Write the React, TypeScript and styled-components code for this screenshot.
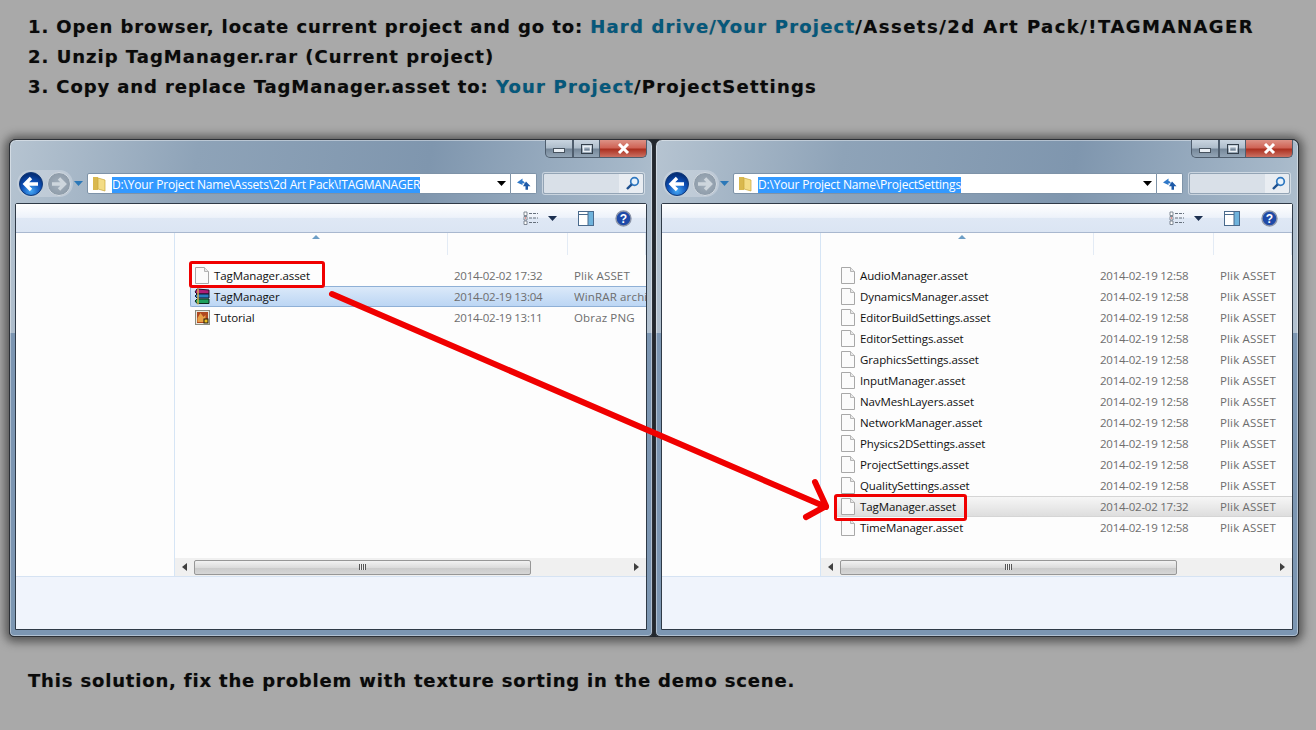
import React from 'react';
import styled, { createGlobalStyle } from 'styled-components';

const GlobalStyle = createGlobalStyle`
  html, body {
    margin: 0;
    padding: 0;
    background: #a9a9a9;
  }
`;

const Page = styled.div`
  position: relative;
  width: 1316px;
  height: 730px;
  overflow: hidden;
  background: #a9a9a9;
`;

const Instructions = styled.ol`
  list-style: none;
  margin: 0;
  padding: 12px 0 0 28px;
`;

const Line = styled.li<{ $ls: number }>`
  height: 30px;
  font: bold 18px/30px 'DejaVu Sans', Verdana, sans-serif;
  letter-spacing: ${(p) => p.$ls}px;
  color: #0a0a0a;
  white-space: nowrap;
  text-shadow: 0 0 1px rgba(0, 0, 0, 0.35);
`;

const Accent = styled.span`
  color: #05587c;
  letter-spacing: 1.2px;
`;

const Tail = styled.span<{ $ls: number }>`
  letter-spacing: ${(p) => p.$ls}px;
`;

const Windows = styled.div`
  display: flex;
  gap: 2px;
  width: 1290px;
  margin: 37px 0 0 9px;
  background: #22272d;
  border-radius: 7px 7px 5px 5px;
  box-shadow: 0 1px 10px 4px rgba(30, 30, 30, 0.6);
`;

const Win = styled.div`
  width: 644px;
  height: 498px;
  box-sizing: border-box;
  padding: 0 5px 6px 5px;
  display: flex;
  flex-direction: column;
  border: 1px solid #2c3036;
  border-radius: 7px 7px 5px 5px;
  background:
    linear-gradient(to bottom, transparent 193px, #7c96b2 193px),
    linear-gradient(100deg, #b6c4d1 0%, #8ea3b8 26%, #7f96ae 58%, #a6b8c9 86%, #c3ced9 100%);
  box-shadow: inset 0 0 0 1px rgba(255, 255, 255, 0.4);
`;

const TitleBar = styled.div`
  height: 18px;
  display: flex;
  justify-content: flex-end;
  flex: none;
`;

const Caption = styled.div<{ $close?: boolean; $w: number }>`
  width: ${(p) => p.$w}px;
  height: 18px;
  box-sizing: border-box;
  display: flex;
  align-items: center;
  justify-content: center;
  border: 1px solid #4f5e6e;
  border-top: none;
  border-left-width: ${(p) => (p.$close ? 0 : 1)}px;
  border-radius: ${(p) => (p.$close ? '0 0 5px 0' : '0')};
  background: ${(p) =>
    p.$close
      ? 'linear-gradient(#dd9286 0%, #cf6355 46%, #ab3020 54%, #cb7062 100%)'
      : 'linear-gradient(#c9d5e0 0%, #aebdcb 46%, #76889a 54%, #93a5b6 100%)'};
  &:first-child {
    border-radius: 0 0 0 5px;
  }
`;

const NavRow = styled.div`
  height: 27px;
  margin-top: 12px;
  display: flex;
  align-items: center;
  flex: none;
`;

const NavButtons = styled.div`
  width: 72px;
  flex: none;
  display: flex;
  align-items: center;
`;

const NavPill = styled.div`
  display: flex;
  align-items: center;
  gap: 2px;
  padding: 0 1px;
  margin-left: 2px;
  height: 27px;
  border-radius: 14px;
  background: rgba(214, 222, 230, 0.45);
`;

const DropArrow = styled.div`
  margin-left: 1px;
  display: flex;
`;

const AddressBar = styled.div`
  width: 424px;
  height: 21px;
  box-sizing: border-box;
  flex: none;
  display: flex;
  align-items: center;
  background: #fff;
  border: 1px solid #7e93a8;
  border-radius: 2px 0 0 2px;
  padding: 0 4px 0 4px;
`;

const Path = styled.div`
  flex: 1;
  margin-left: 6px;
  min-width: 0;
`;

const Selected = styled.span`
  display: inline-block;
  background: #3399ff;
  color: #fff;
  font: 12px/16px 'Open Sans', 'Noto Sans', sans-serif;
  letter-spacing: -0.18px;
  white-space: nowrap;
`;

const Refresh = styled.div`
  width: 26px;
  height: 21px;
  box-sizing: border-box;
  flex: none;
  display: flex;
  align-items: center;
  justify-content: center;
  background: #fff;
  border: 1px solid #7e93a8;
  border-left: none;
  border-radius: 0 2px 2px 0;
`;

const Search = styled.div`
  width: 101px;
  height: 21px;
  box-sizing: border-box;
  flex: none;
  margin-left: 6px;
  display: flex;
  align-items: center;
  justify-content: flex-end;
  padding-right: 3px;
  border: 1px solid #93a4b5;
  border-radius: 2px;
  box-shadow: 0 0 0 1px rgba(235, 240, 245, 0.6);
  background: linear-gradient(90deg, #d9e0e8 0%, #d9e0e8 76%, #e9edf2 76%, #e9edf2 100%);
`;

const Content = styled.div`
  margin-top: 6px;
  flex: 1;
  min-height: 0;
  display: flex;
  flex-direction: column;
  border: 1px solid #2f3a47;
  border-radius: 2px 2px 0 0;
  background: #fff;
`;

const Toolbar = styled.div`
  height: 29px;
  box-sizing: border-box;
  flex: none;
  display: flex;
  align-items: center;
  justify-content: flex-end;
  gap: 21px;
  padding-right: 14px;
  border-bottom: 1px solid #a9b8cf;
  background: linear-gradient(#ffffff 0%, #edf2fa 48%, #dfe8f5 50%, #dbe5f3 100%);
`;

const ViewsGroup = styled.div`
  display: flex;
  align-items: center;
  gap: 9px;
`;

const Body = styled.div`
  flex: 1;
  min-height: 0;
  display: flex;
`;

const Sidebar = styled.div`
  width: 158px;
  flex: none;
  background: #fdfdfd;
  border-right: 1px solid #d6e5f5;
`;

const ListPane = styled.div`
  flex: 1;
  min-width: 0;
  position: relative;
  display: flex;
  flex-direction: column;
  background: #fdfdfd;
  overflow: hidden;
`;

const HeaderStrip = styled.div`
  height: 22px;
  flex: none;
  position: relative;
  display: grid;
  grid-template-columns: 273px 120px 1fr;
`;

const HeaderCell = styled.div`
  border-right: 1px solid #e3ebf5;
  &:last-child {
    border-right: none;
  }
`;

const SortCaret = styled.div`
  position: absolute;
  left: 137px;
  top: 2px;
  width: 0;
  height: 0;
  border-left: 4px solid transparent;
  border-right: 4px solid transparent;
  border-bottom: 4px solid #6d9ec6;
`;

const Rows = styled.div`
  flex: 1;
  min-height: 0;
  margin: 10px 0 0 15px;
`;

const Row = styled.div<{ $tone?: 'blue' | 'grey' }>`
  position: relative;
  height: 21px;
  box-sizing: border-box;
  display: grid;
  grid-template-columns: 263px 120px 120px;
  align-items: center;
  white-space: nowrap;
  border: 1px solid
    ${(p) => (p.$tone === 'blue' ? '#8fb0d6' : p.$tone === 'grey' ? '#d5d5d5' : 'transparent')};
  border-right: none;
  border-radius: 2px 0 0 2px;
  background: ${(p) =>
    p.$tone === 'blue'
      ? 'linear-gradient(#dbe9f9, #bcd6f4)'
      : p.$tone === 'grey'
        ? 'linear-gradient(#f6f6f6, #dedede)'
        : 'transparent'};
`;

const NameCell = styled.div`
  display: flex;
  align-items: center;
  gap: 3px;
  padding-left: 4px;
  font: 11.5px/16px 'Open Sans', 'Noto Sans', sans-serif;
  letter-spacing: -0.1px;
  color: #101010;
`;

const MetaCell = styled.div<{ $ls: number }>`
  font: 11.5px/16px 'Open Sans', 'Noto Sans', sans-serif;
  letter-spacing: ${(p) => p.$ls}px;
  color: #6d6d6d;
  overflow: hidden;
`;

const RedBox = styled.div<{ $w: number; $x: number; $y: number }>`
  position: absolute;
  z-index: 1;
  left: ${(p) => p.$x}px;
  top: ${(p) => p.$y}px;
  width: ${(p) => p.$w}px;
  height: 27px;
  box-sizing: border-box;
  border: 3px solid #f00000;
  border-radius: 3px;
`;

const ScrollBar = styled.div`
  height: 18px;
  flex: none;
  display: flex;
  align-items: center;
  background: #f0f0f0;
`;

const ScrollEnd = styled.div`
  width: 19px;
  flex: none;
  display: flex;
  justify-content: center;
`;

const Thumb = styled.div`
  width: 337px;
  height: 15px;
  box-sizing: border-box;
  display: flex;
  align-items: center;
  justify-content: center;
  border: 1px solid #979797;
  border-radius: 2px;
  background: linear-gradient(#f2f2f2 0%, #dcdcdc 50%, #cacaca 52%, #d6d6d6 100%);
`;

const Track = styled.div`
  flex: 1;
`;

const Grip = styled.div`
  width: 7px;
  height: 6px;
  background: repeating-linear-gradient(90deg, #555 0 1px, #eee 1px 2px);
`;

const Details = styled.div`
  height: 53px;
  box-sizing: border-box;
  flex: none;
  background: #f0f4fc;
  border-top: 1px solid #d6e3f3;
`;

const ArrowOverlay = styled.svg`
  position: absolute;
  left: 0;
  top: 0;
  pointer-events: none;
`;

const Footer = styled.p`
  margin: 34px 0 0 28px;
  font: bold 18px/20px 'DejaVu Sans', Verdana, sans-serif;
  letter-spacing: 0.83px;
  color: #0a0a0a;
  text-shadow: 0 0 1px rgba(0, 0, 0, 0.35);
`;

const DocIcon = () => (
  <svg width="16" height="17" viewBox="0 0 16 17">
    <path d="M0.5 0.5h9l4 4v12h-13z" fill="#fbfbfb" stroke="#a8a8a8" />
    <path d="M9.5 0.5v4h4" fill="#e8e8e8" stroke="#b5b5b5" />
  </svg>
);

const RarIcon = () => (
  <svg width="16" height="17" viewBox="0 0 16 17" style={{ marginLeft: -1, marginRight: 1 }}>
    <path d="M3 1l12 1v4H3L1 4z" fill="#b01e78" stroke="#241028" />
    <path d="M3 6h12v4H3L1 8z" fill="#2a7ec0" stroke="#101a30" />
    <path d="M3 11h12v4.500H3L1 13z" fill="#1ca05c" stroke="#0c2a1c" />
    <path d="M4 0.500v16" stroke="#e0b850" strokeWidth="1.4" />
  </svg>
);

const PngIcon = () => (
  <svg width="16" height="17" viewBox="0 0 16 17">
    <rect x="0.5" y="1.500" width="14" height="14" fill="#e8e8e0" stroke="#8c8c80" />
    <rect x="2" y="3" width="11" height="11" fill="#b04820" />
    <path d="M2.500 9l3-5 3 4 2-2v7h-8z" fill="#e8a048" />
    <rect x="8.500" y="9.500" width="5" height="5" fill="#20180c" />
    <rect x="9.500" y="10.500" width="3" height="3" fill="#f0c020" />
  </svg>
);

const NavCircle = ({ dim }: { dim?: boolean }) => (
  <svg width="26" height="26" viewBox="0 0 26 26">
    <defs>
      <radialGradient id="navBlue" cx="50%" cy="80%" r="72%">
        <stop offset="0%" stopColor="#46a8f4" />
        <stop offset="58%" stopColor="#0d50b8" />
        <stop offset="100%" stopColor="#052f78" />
      </radialGradient>
      <radialGradient id="navGrey" cx="50%" cy="50%" r="60%">
        <stop offset="0%" stopColor="#a4b0bc" />
        <stop offset="100%" stopColor="#8a98a6" />
      </radialGradient>
    </defs>
    <circle
      cx="13"
      cy="13"
      r="11.500"
      fill={dim ? 'url(#navGrey)' : 'url(#navBlue)'}
      stroke={dim ? '#d5dce3' : '#123a78'}
    />
    <path
      d={dim ? 'M6 13h12M13 7.500l5.500 5.500-5.500 5.500' : 'M20 13H8M13 7l-6 6 6 6'}
      fill="none"
      stroke={dim ? '#ced6dd' : '#fff'}
      strokeWidth="3.400"
    />
  </svg>
);

const FolderIcon = () => (
  <svg width="14" height="16" viewBox="0 0 14 16">
    <path d="M1 1h5v13H1z" fill="#d9b84e" />
    <path d="M6 2l7 2v11l-7-2z" fill="#f3dc86" stroke="#c9a63a" strokeWidth="0.7" />
  </svg>
);

const ChevronDown = ({ color }: { color: string }) => (
  <svg width="9" height="5" viewBox="0 0 9 5">
    <path d="M0 0h9L4.500 5z" fill={color} />
  </svg>
);

const ScrollArrow = ({ right }: { right?: boolean }) => (
  <svg width="5" height="8" viewBox="0 0 5 8">
    <path d={right ? 'M0 0l5 4-5 4z' : 'M5 0L0 4l5 4z'} fill="#404040" />
  </svg>
);

const RefreshIcon = () => (
  <svg width="15" height="14" viewBox="0 0 15 14">
    <path d="M6.500 1.500L1 5.500 6.500 8V6.200c1.500 0 2 .3 2.300.8 0-1.500-.8-2.700-2.300-2.900z" fill="#2f78c8" />
    <path d="M10 4.500l4.500 4.700H12v3.600H9.500V9.200H7z" fill="#1e5aa8" />
  </svg>
);

const SearchIcon = () => (
  <svg width="15" height="15" viewBox="0 0 15 15">
    <circle cx="9.500" cy="5.500" r="3.800" fill="#e8f2fb" stroke="#2f78c0" strokeWidth="1.700" />
    <path d="M6.700 8.300L2 13" stroke="#1d4f8f" strokeWidth="2.400" />
  </svg>
);

const ViewsIcon = () => (
  <svg width="16" height="14" viewBox="0 0 16 14">
    <path d="M1 1h3v3.500H1zM1 5.500h3V9H1zM1 10h3v3.500H1z" fill="#fff" stroke="#66707c" strokeWidth="0.8" />
    <rect x="2" y="6.500" width="1" height="1" fill="#d02020" />
    <path d="M6 2.500h9M6 7h9M6 11.500h9" stroke="#66707c" strokeDasharray="3 1" />
  </svg>
);

const PaneIcon = () => (
  <svg width="16" height="15" viewBox="0 0 16 15">
    <rect x="0.500" y="0.500" width="15" height="14" fill="#fff" stroke="#4a6a8c" />
    <rect x="10" y="1" width="5" height="13" fill="#6fb3dc" />
    <path d="M1 3.500h9M10 1v13" stroke="#4a6a8c" />
  </svg>
);

const HelpIcon = () => (
  <svg width="17" height="17" viewBox="0 0 17 17">
    <circle cx="8.500" cy="8.500" r="7.500" fill="#1e49a8" stroke="#8c95a8" strokeWidth="1.400" />
    <text
      x="8.500"
      y="12.600"
      textAnchor="middle"
      fontFamily="'Liberation Sans', sans-serif"
      fontWeight="bold"
      fontSize="12"
      fill="#fff"
    >
      ?
    </text>
  </svg>
);

type FileRow = {
  name: string;
  date: string;
  type: string;
  kind?: 'rar' | 'png';
  tone?: 'blue' | 'grey';
  box?: { w: number; x: number; y: number };
};

const leftFiles: FileRow[] = [
  {
    name: 'TagManager.asset',
    date: '2014-02-02 17:32',
    type: 'Plik ASSET',
    box: { w: 136, x: -2, y: -5 },
  },
  { name: 'TagManager', date: '2014-02-19 13:04', type: 'WinRAR archiwum', kind: 'rar', tone: 'blue' },
  { name: 'Tutorial', date: '2014-02-19 13:11', type: 'Obraz PNG', kind: 'png' },
];

const rightNames = [
  'AudioManager',
  'DynamicsManager',
  'EditorBuildSettings',
  'EditorSettings',
  'GraphicsSettings',
  'InputManager',
  'NavMeshLayers',
  'NetworkManager',
  'Physics2DSettings',
  'ProjectSettings',
  'QualitySettings',
  'TagManager',
  'TimeManager',
];

const rightFiles: FileRow[] = rightNames.map((n) =>
  n === 'TagManager'
    ? {
        name: `${n}.asset`,
        date: '2014-02-02 17:32',
        type: 'Plik ASSET',
        tone: 'grey',
        box: { w: 133, x: -3, y: -3 },
      }
    : { name: `${n}.asset`, date: '2014-02-19 12:58', type: 'Plik ASSET' },
);

const Explorer = ({ path, files }: { path: string; files: FileRow[] }) => (
  <Win>
    <TitleBar>
      <Caption $w={28}>
        <svg width="12" height="5" viewBox="0 0 12 5" style={{ marginTop: 4 }}>
          <rect x="0.500" y="0.500" width="11" height="4" fill="#e8eef4" stroke="#46525e" />
        </svg>
      </Caption>
      <Caption $w={27}>
        <svg width="12" height="10" viewBox="0 0 12 10">
          <rect x="0.500" y="0.500" width="11" height="9" fill="none" stroke="#34404c" />
          <rect x="2.500" y="2.500" width="7" height="5" fill="none" stroke="#e8eef4" strokeWidth="1.500" />
        </svg>
      </Caption>
      <Caption $w={47} $close>
        <svg width="13" height="11" viewBox="0 0 13 11">
          <path d="M2 1l9 9M11 1l-9 9" stroke="#fff" strokeWidth="3" />
        </svg>
      </Caption>
    </TitleBar>
    <NavRow>
      <NavButtons>
        <NavPill>
          <NavCircle />
          <NavCircle dim />
        </NavPill>
        <DropArrow>
          <ChevronDown color="#2b78b8" />
        </DropArrow>
      </NavButtons>
      <AddressBar>
        <FolderIcon />
        <Path>
          <Selected>{path}</Selected>
        </Path>
        <ChevronDown color="#000" />
      </AddressBar>
      <Refresh>
        <RefreshIcon />
      </Refresh>
      <Search>
        <SearchIcon />
      </Search>
    </NavRow>
    <Content>
      <Toolbar>
        <ViewsGroup>
          <ViewsIcon />
          <ChevronDown color="#1c3050" />
        </ViewsGroup>
        <PaneIcon />
        <HelpIcon />
      </Toolbar>
      <Body>
        <Sidebar />
        <ListPane>
          <HeaderStrip>
            <HeaderCell />
            <HeaderCell />
            <HeaderCell />
            <SortCaret />
          </HeaderStrip>
          <Rows>
            {files.map((f) => (
              <Row key={f.name} $tone={f.tone}>
                <NameCell>
                  {f.kind === 'rar' ? <RarIcon /> : f.kind === 'png' ? <PngIcon /> : <DocIcon />}
                  {f.name}
                </NameCell>
                <MetaCell $ls={-0.25}>{f.date}</MetaCell>
                <MetaCell $ls={0.15}>{f.type}</MetaCell>
                {f.box && <RedBox $w={f.box.w} $x={f.box.x} $y={f.box.y} />}
              </Row>
            ))}
          </Rows>
          <ScrollBar>
            <ScrollEnd>
              <ScrollArrow />
            </ScrollEnd>
            <Thumb>
              <Grip />
            </Thumb>
            <Track />
            <ScrollEnd>
              <ScrollArrow right />
            </ScrollEnd>
          </ScrollBar>
        </ListPane>
      </Body>
      <Details />
    </Content>
  </Win>
);

export default function App() {
  return (
    <Page>
      <GlobalStyle />
      <Instructions>
        <Line $ls={0.91}>
          1. Open browser, locate current project and go to: <Accent>Hard drive/Your Project</Accent>
          <Tail $ls={1.48}>/Assets/2d Art Pack/!TAGMANAGER</Tail>
        </Line>
        <Line $ls={1}>2. Unzip TagManager.rar (Current project)</Line>
        <Line $ls={0.9}>
          3. Copy and replace TagManager.asset to: <Accent>Your Project</Accent>
          <Tail $ls={1.2}>/ProjectSettings</Tail>
        </Line>
      </Instructions>
      <Windows>
        <Explorer path="D:\Your Project Name\Assets\2d Art Pack\!TAGMANAGER" files={leftFiles} />
        <Explorer path="D:\Your Project Name\ProjectSettings" files={rightFiles} />
      </Windows>
      <Footer>This solution, fix the problem with texture sorting in the demo scene.</Footer>
      <ArrowOverlay width="1316" height="730" viewBox="0 0 1316 730">
        <path
          d="M332 294L826 507M815 482L826 506L806 517"
          fill="none"
          stroke="#f00000"
          strokeWidth="6"
          strokeLinecap="round"
          strokeLinejoin="round"
        />
      </ArrowOverlay>
    </Page>
  );
}
